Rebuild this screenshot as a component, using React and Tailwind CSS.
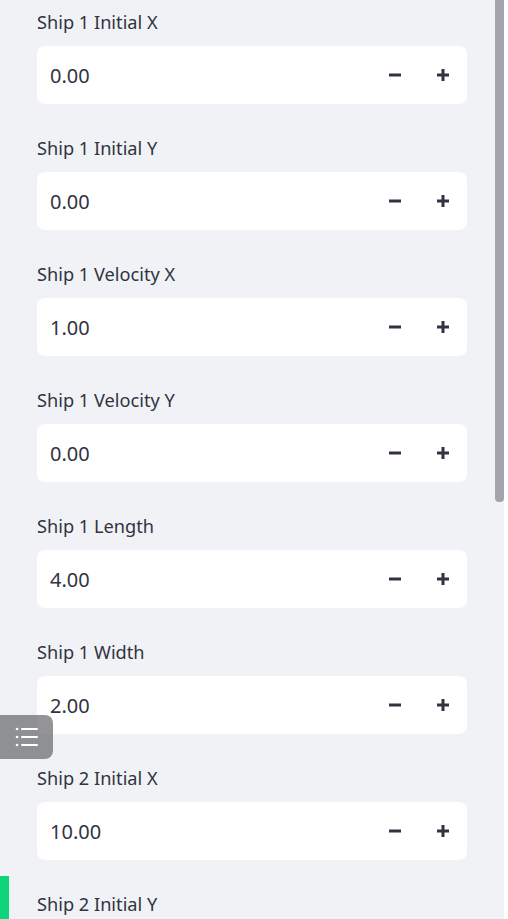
import React from "react";

const fields = [
  ["Ship 1 Initial X", "0.00"],
  ["Ship 1 Initial Y", "0.00"],
  ["Ship 1 Velocity X", "1.00"],
  ["Ship 1 Velocity Y", "0.00"],
  ["Ship 1 Length", "4.00"],
  ["Ship 1 Width", "2.00"],
  ["Ship 2 Initial X", "10.00"],
  ["Ship 2 Initial Y", "0.00"],
];

function Minus() {
  return (
    <svg width="12" height="12" viewBox="0 0 12 12">
      <rect x="0" y="4.5" width="12" height="3" fill="#31333f" />
    </svg>
  );
}

function Plus() {
  return (
    <svg width="12" height="12" viewBox="0 0 12 12">
      <rect x="0" y="4.5" width="12" height="3" fill="#31333f" />
      <rect x="4.5" y="0" width="3" height="12" fill="#31333f" />
    </svg>
  );
}

function Field({ label, value }) {
  return (
    <div className="flex flex-col">
      <div className="h-[31px] leading-[31px] text-[18.2px] text-[#31333f] mb-[8px] whitespace-nowrap">
        {label}
      </div>
      <div className="h-[58px] w-[430px] bg-white rounded-[8px] flex items-center">
        <div className="flex-1 pl-[13px] pt-[1px] text-[20px] text-[#31333f]">{value}</div>
        <button className="w-[48px] h-full flex items-center justify-center">
          <Minus />
        </button>
        <button className="w-[48px] h-full flex items-center justify-center">
          <Plus />
        </button>
      </div>
    </div>
  );
}

export default function App() {
  return (
    <div
      className="w-[508px] h-[919px] overflow-hidden bg-white flex relative"
      style={{ fontFamily: '"Noto Sans", Lato, sans-serif' }}
    >
      <div className="w-[504px] h-full bg-[#f0f2f6] relative overflow-hidden">
        <div className="pl-[37px] pt-[7px] flex flex-col gap-[29px]">
          {fields.map(([l, v]) => (
            <Field key={l} label={l} value={v} />
          ))}
        </div>
        <div className="absolute right-0 top-0 w-[9px] h-[502px] bg-[#a4a4ad] rounded-b-[4px]" />
        <div className="absolute left-0 top-[876px] w-[9px] h-[43px] bg-[#0ed47b]" />
        <div className="absolute left-0 top-[715px] w-[53px] h-[44px] rounded-r-[8px] bg-[rgba(90,90,95,0.65)] flex items-center justify-center">
          <svg width="26" height="22" viewBox="0 0 26 22">
            <circle cx="3" cy="3" r="1.3" fill="white" />
            <circle cx="3" cy="11" r="1.3" fill="white" />
            <circle cx="3" cy="19" r="1.3" fill="white" />
            <rect x="7" y="2" width="17" height="2" rx="1" fill="white" />
            <rect x="7" y="10" width="17" height="2" rx="1" fill="white" />
            <rect x="7" y="18" width="17" height="2" rx="1" fill="white" />
          </svg>
        </div>
      </div>
    </div>
  );
}
